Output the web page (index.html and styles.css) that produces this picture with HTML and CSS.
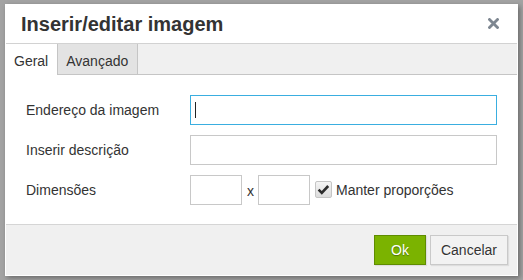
FILE: index.html
```html
<!DOCTYPE html>
<html lang="pt">
<head>
<meta charset="utf-8">
<title>Inserir/editar imagem</title>
<link rel="stylesheet" href="styles.css">
</head>
<body>
<div class="dialog">
  <div class="head">
    <span class="title">Inserir/editar imagem</span>
    <button class="close" aria-label="Fechar">
      <svg width="11" height="11" viewBox="0 0 11 11"><path d="M1.5 1.5 L9.5 9.5 M9.5 1.5 L1.5 9.5" stroke="#7e8791" stroke-width="2.8" stroke-linecap="square" fill="none"/></svg>
    </button>
  </div>
  <div class="tabs">
    <div class="tab active">Geral</div>
    <div class="tab">Avançado</div>
  </div>
  <div class="body">
    <div class="row">
      <label class="label">Endereço da imagem</label>
      <div class="field focus"><span class="caret"></span></div>
    </div>
    <div class="row">
      <label class="label">Inserir descrição</label>
      <div class="field"></div>
    </div>
    <div class="row">
      <label class="label">Dimensões</label>
      <div class="dims">
        <div class="field small"></div>
        <span class="times">x</span>
        <div class="field small"></div>
        <span class="check"><svg width="17" height="17" viewBox="0 0 17 17"><path d="M3.6 8.6 L6.8 11.8 L13.2 5" stroke="#2b2b2b" stroke-width="2.6" fill="none"/></svg></span>
        <span class="check-label">Manter proporções</span>
      </div>
    </div>
  </div>
  <div class="foot">
    <button class="btn ok">Ok</button>
    <button class="btn">Cancelar</button>
  </div>
</div>
</body>
</html>
```
FILE: styles.css
```css
html, body {
  margin: 0;
  padding: 0;
}
body {
  background: #a3a3a3;
  font-family: "Liberation Sans", Arial, sans-serif;
  font-size: 14px;
  color: #333;
  padding: 4px 0 0 5px;
  height: 280px;
  box-sizing: border-box;
  overflow: hidden;
}
.dialog {
  width: 511px;
  height: 270px;
  border: 1px solid #fff;
  background: #fff;
  box-shadow: 2px 2px 5px rgba(0, 0, 0, 0.35);
  display: flex;
  flex-direction: column;
}
.head {
  height: 39px;
  box-sizing: border-box;
  border-bottom: 1px solid #d2d2d2;
  display: flex;
  align-items: center;
  justify-content: space-between;
  padding: 0 18px 1px 15px;
}
.title {
  font-size: 20px;
  font-weight: bold;
  line-height: 30px;
  color: #333;
}
.close {
  border: 0;
  background: none;
  padding: 0;
  width: 11px;
  height: 11px;
  display: block;
}
.close svg {
  display: block;
}
.tabs {
  display: flex;
  align-items: flex-start;
  height: 31px;
  box-sizing: border-box;
  background: #f0f0f0;
  border-bottom: 1px solid #c5c5c5;
}
.tab {
  padding: 9px 9px 5px 8px;
  line-height: 16px;
  background: #e3e3e3;
  border-right: 1px solid #c5c5c5;
  color: #333;
}
.tab.active {
  background: #fff;
  margin-bottom: -1px;
  padding-bottom: 6px;
}
.body {
  flex: 1;
  padding: 20px 20px 0;
  display: flex;
  flex-direction: column;
  gap: 10px;
}
.row {
  display: grid;
  grid-template-columns: 164px 1fr;
  align-items: center;
  height: 30px;
}
.label {
  line-height: 16px;
}
.field {
  height: 30px;
  box-sizing: border-box;
  border: 1px solid #c8c8c8;
  background: #fff;
  display: flex;
  align-items: center;
  padding-left: 4px;
}
.field.focus {
  border-color: #3aaee0;
}
.caret {
  display: block;
  width: 1px;
  height: 16px;
  background: #222;
}
.dims {
  display: flex;
  align-items: center;
}
.field.small {
  width: 52px;
}
.times {
  margin: 0 4px 0 5px;
  line-height: 16px;
  padding-top: 2px;
}
.check {
  margin-left: 5px;
  margin-bottom: 2px;
  width: 17px;
  height: 17px;
  box-sizing: border-box;
  border: 1px solid #c5c5c5;
  border-radius: 2px;
  background: linear-gradient(#f4f4f4, #dcdcdc);
  display: block;
}
.check svg {
  display: block;
  margin: -1px;
}
.check-label {
  margin-left: 4px;
  line-height: 16px;
}
.foot {
  height: 51px;
  box-sizing: border-box;
  border-top: 1px solid #d5d5d5;
  background: #f0f0f0;
  display: flex;
  justify-content: flex-end;
  align-items: flex-start;
  gap: 4px;
  padding: 10px 9px 0 0;
}
.btn {
  height: 30px;
  box-sizing: border-box;
  padding: 0 10px;
  font-family: inherit;
  font-size: 14px;
  color: #333;
  background: #f2f2f2;
  border: 1px solid #c9c9c9;
  box-shadow: 1px 1px 1px rgba(0, 0, 0, 0.08);
  text-shadow: 0 1px 1px rgba(255, 255, 255, 0.75);
}
.btn.ok {
  min-width: 52px;
  background: #7bb300;
  border-color: #5f8c00;
  color: #fff;
  text-shadow: 0 1px 1px rgba(0, 0, 0, 0.35);
}
```
